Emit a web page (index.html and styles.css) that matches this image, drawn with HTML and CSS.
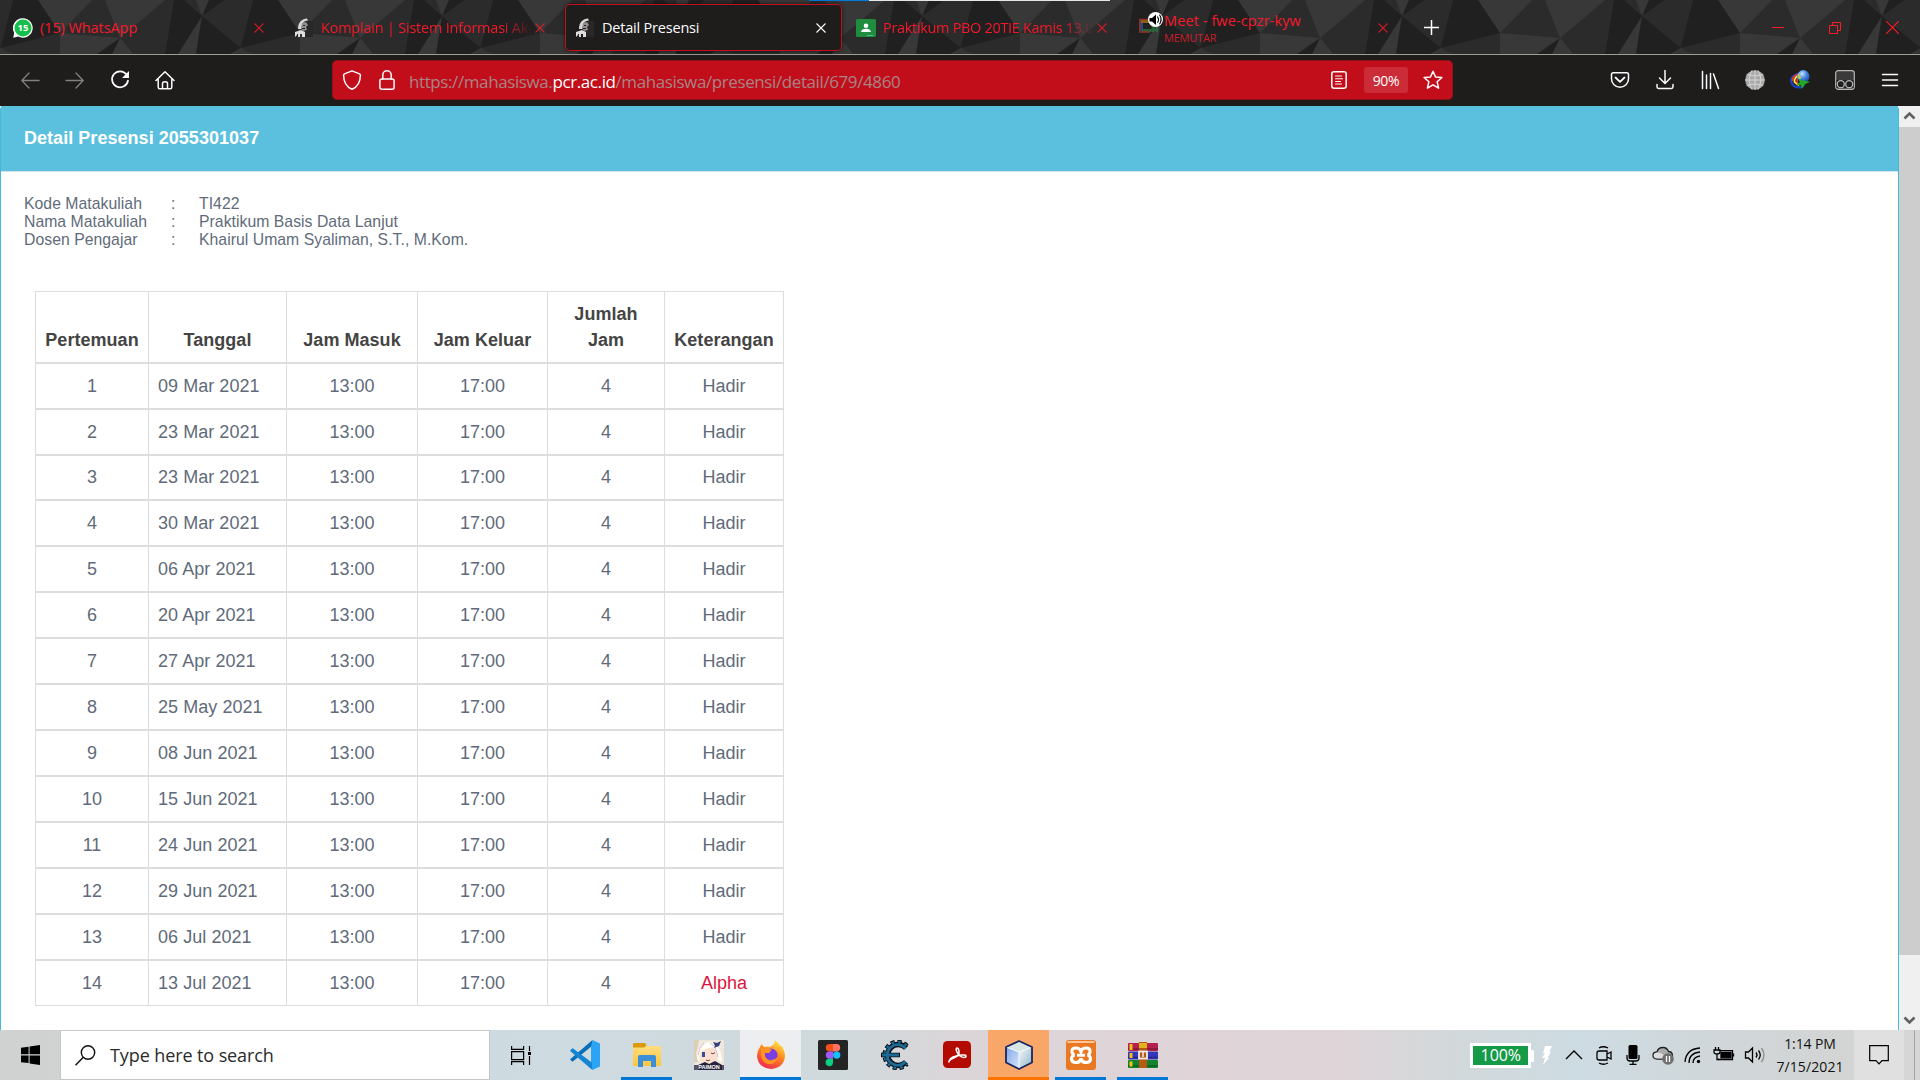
FILE: index.html
```html
<!DOCTYPE html>
<html lang="id">
<head>
<meta charset="utf-8">
<title>Detail Presensi</title>
<link rel="stylesheet" href="styles.css">
</head>
<body>
<svg class="defs" width="0" height="0" aria-hidden="true">
  <defs>
    <symbol id="x" viewBox="0 0 10 10"><path d="M.5.5l9 9M9.500.5l-9 9" fill="none" stroke="currentColor" stroke-width="1.1"/></symbol>
    <symbol id="statue" viewBox="0 0 20 20">
      <path d="M10 3h9v16H8z" fill="#2a2728"/>
      <path d="M4 11C4 4 8 1 13 .5l1 2C9 3 8 6 7.500 11z" fill="#d6d6d6"/>
      <path d="M8 5l4-1 2 3-2 2 1 3-4 1-2-3z" fill="#8f8f8f"/>
      <path d="M1 14l6-2 4 2v5H8v-3H6v3H4v-3l-3 3z" fill="#dedede"/>
      <path d="M9 7h2v1H9zM8 10h3v1H8zM3 16h1v3H3z" fill="#222"/>
    </symbol>
    <linearGradient id="fx" x1=".8" y1="0" x2=".3" y2="1"><stop offset="0" stop-color="#fff14a"/><stop offset=".45" stop-color="#ff8a1f"/><stop offset="1" stop-color="#f0264f"/></linearGradient>
    <linearGradient id="fld" x1="0" y1="0" x2="0" y2="1"><stop offset="0" stop-color="#ffe08a"/><stop offset="1" stop-color="#fcc63c"/></linearGradient>
    <linearGradient id="cubeL" x1="0" y1="0" x2="1" y2="1"><stop offset="0" stop-color="#7ea6e8"/><stop offset="1" stop-color="#d9e6fb"/></linearGradient>
    <linearGradient id="cubeR" x1="0" y1="0" x2="1" y2="1"><stop offset="0" stop-color="#f4f9fb"/><stop offset="1" stop-color="#8fb5c8"/></linearGradient>
    <radialGradient id="earth" cx=".4" cy=".3" r=".7"><stop offset="0" stop-color="#cfe6ff"/><stop offset=".5" stop-color="#4a8be0"/><stop offset="1" stop-color="#1b4fa8"/></radialGradient>
  </defs>
</svg>

<div class="screen">
  <header class="tabstrip">
    <svg class="theme" width="1920" height="54">
      <defs>
        <pattern id="poly" x="60" y="0" width="240" height="54" patternUnits="userSpaceOnUse">
          <rect width="240" height="54" fill="#2b2b2b"/>
          <g fill="#383838">
            <path d="M218 0L240 33V0zM0 0H32L0 33zM45 0H105L60 38zM0 33L60 38 37 54H0zM60 38L52 54H73zM136 0H149L142 16zM142 16L118 54H136z"/>
            <path d="M180.500 48L170 54H192z" fill="#333"/>
          </g>
          <g fill="#202020">
            <path d="M60 38L37 54H52zM114 0H124L142 16 118 54H105zM149 0H165L142 16zM142 16L180.500 48 170 54H136zM193 0H218L240 33 180.500 48z"/>
          </g>
        </pattern>
      </defs>
      <rect width="1920" height="54" fill="url(#poly)"/>
    </svg>
    <div class="snapbar"></div>
    <div class="tab">
      <svg class="fav" width="20" height="20" viewBox="0 0 20 20"><path d="M10 .3a9.700 9.700 0 1 1-4.700 18.200L.2 19.800l1-5A9.700 9.700 0 0 1 10 .3z" fill="#fff"/><circle cx="10" cy="10" r="8.500" fill="#14c04b"/><text x="10" y="13.300" text-anchor="middle" class="favnum">15</text></svg>
      <span class="tt t1">(15) WhatsApp</span>
      <svg class="close dim" width="10" height="10"><use href="#x"/></svg>
    </div>
    <div class="tab">
      <svg class="fav" width="20" height="20"><use href="#statue"/></svg>
      <span class="tt t2 fade">Komplain | Sistem Informasi Aka</span>
      <svg class="close dim" width="10" height="10"><use href="#x"/></svg>
    </div>
    <div class="tab active">
      <svg class="fav" width="20" height="20"><use href="#statue"/></svg>
      <span class="tt t3">Detail Presensi</span>
      <svg class="close" width="10" height="10"><use href="#x"/></svg>
    </div>
    <div class="tab">
      <svg class="fav" width="20" height="20" viewBox="0 0 20 20"><rect y="1" width="20" height="18" rx="1.500" fill="#1e8e3e"/><circle cx="10" cy="7.800" r="2.300" fill="#fff"/><path d="M5 14c0-4.500 10-4.500 10 0z" fill="#fff"/><path d="M11 17h6v1h-6z" fill="#57bb8a"/></svg>
      <span class="tt t4 fade">Praktikum PBO 20TIE Kamis 13.0</span>
      <svg class="close dim" width="10" height="10"><use href="#x"/></svg>
    </div>
    <div class="tab meet">
      <svg class="fav meetfav" width="28" height="26" viewBox="0 0 28 26"><g fill="none" stroke-width="3" opacity=".62"><path d="M3.500 8v11" stroke="#2a62c4"/><path d="M3 9.500h9" stroke="#c98a1a"/><path d="M4 18.500h11V12" stroke="#278a45"/><path d="M10 7.500H1.800v12.500H12" stroke="#d63d2c" stroke-width="1.500"/><path d="M15 14l4-2v7l-4-3" stroke="#278a45" stroke-width="2"/></g><circle cx="17.500" cy="7.500" r="7.500" fill="#fff"/><path d="M11.500 6h2.500l4-3.500v10.500l-4-3.500h-2.500z" fill="#000"/><path d="M19.500 4.500q2 3 0 6.200M21.500 2.800q3.200 4.700 0 9.500" fill="none" stroke="#000" stroke-width="1.100"/></svg>
      <span class="stack"><span class="tt t5">Meet - fwe-cpzr-kyw</span><span class="playing">MEMUTAR</span></span>
      <svg class="close dim" width="10" height="10"><use href="#x"/></svg>
    </div>
    <svg class="newtab" width="15" height="15" viewBox="0 0 15 15"><path d="M7.500 0v15M0 7.500h15" stroke="#fff" stroke-width="1.500"/></svg>
    <div class="winbtns">
      <svg width="12" height="13" viewBox="0 0 12 13"><path d="M0 6.500h12" stroke="#ff1a2a"/></svg>
      <svg width="12" height="13" viewBox="0 0 12 13"><path d="M.5 4.500h8v8h-8zM3.500 4V1.500h8v8H9" fill="none" stroke="#ff1a2a"/></svg>
      <svg width="13" height="13" viewBox="0 0 10 10"><path d="M.2.2l9.600 9.600M9.800.2L.2 9.800" stroke="#ff1a2a" stroke-width=".9"/></svg>
    </div>
  </header>

  <nav class="toolbar">
    <div class="navbtns">
      <svg width="20" height="20" viewBox="0 0 20 20" class="off"><path d="M19 10.500H2M9 3L1.800 10.500 9 18"/></svg>
      <svg width="20" height="20" viewBox="0 0 20 20" class="off"><path d="M1 10.500h17M11 3l7.200 7.500L11 18"/></svg>
      <svg width="20" height="20" viewBox="0 0 20 20"><path d="M16.500 4.500A8 8 0 1 0 18 10.500" stroke-width="1.700"/><path d="M19 1v7h-7z" fill="#fbfbfe" stroke="none"/></svg>
      <svg width="20" height="20" viewBox="0 0 20 20"><path d="M1 10.500L10 1.800l9 8.700M3.200 9v8.300q0 1.500 1.500 1.500h10.600q1.500 0 1.500-1.500V9M7.500 18.500v-5q0-1.700 2.500-1.700t2.500 1.700v5" stroke-width="1.500"/></svg>
    </div>
    <div class="urlbar">
      <svg width="20" height="20" viewBox="0 0 20 20" class="shield"><path d="M10 .9l7.500 3q1 .4.900 1.500C18.300 12 15 17 10 19.300 5 17 1.700 12 1.600 5.400q0-1.100.9-1.500z"/></svg>
      <svg width="16" height="20" viewBox="0 0 16 20" class="lock"><rect x=".9" y="9" width="14.200" height="10.200" rx="2"/><path d="M3.800 9V5a4.200 4.200 0 0 1 8.400 0v4"/></svg>
      <span class="url">https://mahasiswa.<b>pcr.ac.id</b>/mahasiswa/presensi/detail/679/4860</span>
      <svg width="16" height="18" viewBox="0 0 16 18" class="reader"><rect x=".8" y=".8" width="14.400" height="16.400" rx="2.200"/><path d="M4.500 5h6M4.500 7.800h7M4.500 10.500h5M4.500 13h6" stroke-width="1.100"/></svg>
      <span class="zoom">90%</span>
      <svg width="20" height="20" viewBox="0 0 20 20" class="star"><path d="M10 1.200l2.500 5.700 6.400.6-4.800 4.200 1.500 6.500-5.600-3.400-5.600 3.400 1.500-6.500L1.100 7.500l6.400-.6z"/></svg>
    </div>
    <div class="tools">
      <svg width="20" height="20" viewBox="0 0 20 20"><path d="M3.200 2.800h13.600q1.700 0 1.700 1.700v4.300a8.500 8.500 0 0 1-17 0V4.500q0-1.700 1.700-1.700z"/><path d="M5.500 7.500L10 11.800l4.500-4.300" stroke-width="1.800"/></svg>
      <svg width="20" height="20" viewBox="0 0 20 20"><path d="M10 0v13M4.500 8l5.500 5.500L15.500 8M2 14.500v2.300q0 1.600 1.600 1.600h12.800q1.600 0 1.600-1.600v-2.300"/></svg>
      <svg width="20" height="20" viewBox="0 0 20 20"><path d="M2.500 1.500v17M6.500 5v13.500M10.500 3.500v15M13.500 4l5 14.500"/></svg>
      <svg width="20" height="20" viewBox="0 0 20 20"><circle cx="10" cy="10" r="9.800" fill="#a9a9a9" stroke="none"/><path d="M10 0v20M0 10h20M2 4.500q8 3 16 0M2 15.500q8-3 16 0M7 .5q-6 9.500 0 19M13 .5q6 9.500 0 19" stroke="#dedede" stroke-width=".8"/></svg>
      <svg width="20" height="20" viewBox="0 0 20 20"><path d="M8 4Q2 6 1 10q0 5 5 7 4 1 7-1" stroke="#1c3fc0" stroke-width="2.400"/><path d="M8 4.500Q3 6 2.500 10" stroke="#d8372b" stroke-width="2"/><path d="M8.500 5.500Q4 8 4.500 12l4 3" stroke="#ffe24a" stroke-width="1.800"/><path d="M8.500 8Q6 10 7.500 13" stroke="#e6392b" stroke-width="1.600"/><circle cx="13.300" cy="6.300" r="6.200" fill="url(#earth)" stroke="none"/><path d="M8 3.500c2 2 4 3 2.500 6L7.500 8z" fill="#b7c95a" stroke="none"/><path d="M8.500 9.500l11.500 2.300-4.500 2.200-4 5-.5-4-5 .5 4-3.500z" fill="#23a823" stroke="none"/></svg>
      <svg width="20" height="20" viewBox="0 0 20 20"><rect x=".7" y=".7" width="18.600" height="18.600" rx="2.500" fill="#3a3a3a" stroke="#b5b5b5" stroke-width="1.200"/><path d="M1.500 10h17v8h-17z" fill="#1f1f1f" stroke="none"/><circle cx="5.800" cy="14.200" r="3.500" stroke="#b5b5b5" stroke-width="1.300"/><circle cx="14.200" cy="14.200" r="3.500" stroke="#b5b5b5" stroke-width="1.300"/></svg>
      <svg width="20" height="20" viewBox="0 0 20 20"><path d="M2.500 4.500h15M2.500 10h15M2.500 15.500h15"/></svg>
    </div>
  </nav>

  <div class="viewport">
    <main class="panel">
      <h1>Detail Presensi 2055301037</h1>
      <dl class="info">
        <dt>Kode Matakuliah</dt><dd>:</dd><dd>TI422</dd>
        <dt>Nama Matakuliah</dt><dd>:</dd><dd>Praktikum Basis Data Lanjut</dd>
        <dt>Dosen Pengajar</dt><dd>:</dd><dd>Khairul Umam Syaliman, S.T., M.Kom.</dd>
      </dl>
      <table>
        <thead><tr><th>Pertemuan</th><th>Tanggal</th><th>Jam Masuk</th><th>Jam Keluar</th><th>Jumlah<br>Jam</th><th>Keterangan</th></tr></thead>
        <tbody>
          <tr><td>1</td><td>09 Mar 2021</td><td>13:00</td><td>17:00</td><td>4</td><td>Hadir</td></tr>
          <tr><td>2</td><td>23 Mar 2021</td><td>13:00</td><td>17:00</td><td>4</td><td>Hadir</td></tr>
          <tr><td>3</td><td>23 Mar 2021</td><td>13:00</td><td>17:00</td><td>4</td><td>Hadir</td></tr>
          <tr><td>4</td><td>30 Mar 2021</td><td>13:00</td><td>17:00</td><td>4</td><td>Hadir</td></tr>
          <tr><td>5</td><td>06 Apr 2021</td><td>13:00</td><td>17:00</td><td>4</td><td>Hadir</td></tr>
          <tr><td>6</td><td>20 Apr 2021</td><td>13:00</td><td>17:00</td><td>4</td><td>Hadir</td></tr>
          <tr><td>7</td><td>27 Apr 2021</td><td>13:00</td><td>17:00</td><td>4</td><td>Hadir</td></tr>
          <tr><td>8</td><td>25 May 2021</td><td>13:00</td><td>17:00</td><td>4</td><td>Hadir</td></tr>
          <tr><td>9</td><td>08 Jun 2021</td><td>13:00</td><td>17:00</td><td>4</td><td>Hadir</td></tr>
          <tr><td>10</td><td>15 Jun 2021</td><td>13:00</td><td>17:00</td><td>4</td><td>Hadir</td></tr>
          <tr><td>11</td><td>24 Jun 2021</td><td>13:00</td><td>17:00</td><td>4</td><td>Hadir</td></tr>
          <tr><td>12</td><td>29 Jun 2021</td><td>13:00</td><td>17:00</td><td>4</td><td>Hadir</td></tr>
          <tr><td>13</td><td>06 Jul 2021</td><td>13:00</td><td>17:00</td><td>4</td><td>Hadir</td></tr>
          <tr><td>14</td><td>13 Jul 2021</td><td>13:00</td><td>17:00</td><td>4</td><td class="alpha">Alpha</td></tr>
        </tbody>
      </table>
    </main>
    <div class="scrollbar">
      <svg width="21" height="21" viewBox="0 0 21 21"><path d="M5.500 12.500l5-5 5 5" fill="none" stroke="#606060" stroke-width="2.600"/></svg>
      <div class="thumb"></div>
      <svg width="21" height="21" viewBox="0 0 21 21"><path d="M5.500 8.500l5 5 5-5" fill="none" stroke="#606060" stroke-width="2.600"/></svg>
    </div>
  </div>

  <footer class="taskbar">
    <div class="start"><svg width="19" height="20" viewBox="0 0 19 20"><path d="M0 2.700l7.600-1v7.600H0zM8.600 1.500L19 0v9.300H8.600zM0 10.400h7.600v7.700L0 17.200zM8.600 10.400H19V20L8.600 18.400z"/></svg></div>
    <div class="search">
      <svg width="21" height="21" viewBox="0 0 21 21"><circle cx="13" cy="7.500" r="6.700" fill="none" stroke="#111" stroke-width="1.400"/><path d="M8.300 12.300L.5 20.300" stroke="#111" stroke-width="1.500"/></svg>
      <span>Type here to search</span>
    </div>
    <div class="taskview"><svg width="20" height="19" viewBox="0 0 20 19"><path d="M.6 0v3.400h12V0M.6 5.600h12v8H.6zM.6 19v-3.400h12V19M18.500 0v5M18.500 10v9" fill="none" stroke="#000" stroke-width="1.200"/><path d="M17 6h3v3h-3z"/></svg></div>
    <div class="apps">
      <div class="app"><svg width="30" height="30" viewBox="0 0 30 30"><path d="M0 10.500l2.500-2.300L24 24l-1.500 6z" fill="#1f9cf0"/><path d="M0 19.500l2.500 2.300L22 6l.5-6L1 18.500z" fill="#0b6fb8"/><path d="M22.500 0L30 3.500v23L22.500 30 21 26.500V7z" fill="#2ba4f5"/><path d="M2.500 8.200L22 23v6.500L.3 11z" fill="#1684d0"/></svg></div>
      <div class="app open"><svg width="28" height="24" viewBox="0 0 28 24"><path d="M1 0h11l2 3H28v19q0 1-1 1H1q-1 0-1-1V1z" fill="url(#fld)"/><path d="M1 0h11l1.500 2-2 2.500H0V1z" fill="#d99a0b"/><path d="M5 24V14q0-2 2-2h14q2 0 2 2v10h-5v-6h-8v6z" fill="#3a8fd6"/></svg></div>
      <div class="app"><svg width="30" height="30" viewBox="0 0 30 30"><rect width="30" height="30" rx="1" fill="#f0e7dc"/><path d="M0 0h5L2 14l2 8H0z" fill="#dccdb5"/><path d="M6 9q8-5 17 1l0 9q-4 6-10 5-6-2-7-8z" fill="#fbe0cf"/><path d="M3 19Q3 4 15 2q12 0 13 20l-4-2-1-8-4-5-7 2-5 2-2 6 1 6z" fill="#fffdfa"/><path d="M10 3q-5 5-6 12M16 3q6 3 8 14" fill="none" stroke="#cfc4c4"/><path d="M23 3l-4-1 2 4-1 2 5-2 2-5z" fill="#33407c"/><path d="M8 12h3v5H8z" fill="#3c4a9c"/><path d="M17 13q2 2 4-.500M12 20q2 1.500 4 0" fill="none" stroke="#734248"/><path d="M4 25l7-3 4 2 6-3 7 4v5H4z" fill="#25233b"/><path d="M0 25h30v5H0z" fill="#25233b" opacity=".75"/><text x="15" y="29" text-anchor="middle" class="cap">PAIMON</text></svg></div>
      <div class="app focus"><svg width="28" height="29" viewBox="0 0 28 29"><path d="M3 7l1.500-3L7 7q4-1 6 0l4-3 1-4 4 4 2 2 1.500 1Q28 12 28 16 27 28 14 29 1 28 0 16 0 11 3 7z" fill="url(#fx)"/><circle cx="14" cy="15" r="6.500" fill="#7b3ee0"/><path d="M4 9q5-2 7 0l4 .5-3 3.500-4 0q-1 5 4 7 5 1 9-3-2 8-10 7Q3 22 4 9z" fill="#ff9420"/></svg></div>
      <div class="app"><svg width="30" height="30" viewBox="0 0 30 30"><rect width="30" height="30" rx="1.500" fill="#242424"/><path d="M15 4h-3.500a3.700 3.700 0 0 0 0 7.400H15z" fill="#f24e1e"/><path d="M15 4h3.500a3.700 3.700 0 0 1 0 7.400H15z" fill="#ff7262"/><path d="M15 11.400h-3.500a3.700 3.700 0 0 0 0 7.400H15z" fill="#a259ff"/><circle cx="18.700" cy="15.100" r="3.700" fill="#1abcfe"/><path d="M15 18.800h-3.500a3.700 3.700 0 1 0 3.500 3.700z" fill="#0acf83"/></svg></div>
      <div class="app"><svg width="28" height="30" viewBox="0 0 28 30"><g fill="none"><path d="M26 6A13 13 0 1 0 26 24" stroke="#0b0f14" stroke-width="4.500" stroke-dasharray="4 2.600"/><path d="M25 8A10.500 10.500 0 1 0 25 22" stroke="#0b0f14" stroke-width="5.500"/><path d="M26 6A13 13 0 1 0 26 24" stroke="#1c6a95" stroke-width="2.500" stroke-dasharray="2.600 4" stroke-dashoffset="-.7"/><path d="M0 15h19" stroke="#0b0f14" stroke-width="4.500"/><path d="M24.500 8.500A10.300 10.300 0 1 0 24.500 21.500M1 15h17" stroke="#1c6a95" stroke-width="2.800"/></g></svg></div>
      <div class="app"><svg width="28" height="28" viewBox="0 0 28 28"><rect width="28" height="27" rx="4.500" fill="#b30b00"/><path d="M6 20c2-3 6-3 9-5 2-2 1-8-1-8s0 6 3 8 6 2 6 0-8-1-13 1-4 7-4 4z" fill="none" stroke="#fff" stroke-width="1.500"/></svg></div>
      <div class="app alert"><svg width="30" height="30" viewBox="0 0 30 30"><path d="M15 1L28 7v15.500L15 29 2 22.500V7z" fill="#d7e6e3"/><path d="M2 7l13 5v17L2 22.500z" fill="url(#cubeL)"/><path d="M28 7l-13 5v17l13-6.500z" fill="url(#cubeR)"/><path d="M2 7l13 5 13-5M15 12v16" fill="none" stroke="#f4fbff"/><path d="M15 1L28 7v15.500L15 29 2 22.500V7z" fill="none" stroke="#1b2560" stroke-width="1.800" stroke-linejoin="round"/></svg></div>
      <div class="app open"><svg width="30" height="30" viewBox="0 0 30 30"><rect width="30" height="30" rx="3" fill="#ea7722"/><path d="M1.500 1h27v2h-27z" fill="#ffc79a"/><path d="M10 8q4 0 5 3.500Q16 8 20 8q4.500 0 4 4-.5 2.500-2.500 3 2.500.5 3 3.500 0 4-4.500 4-4 0-5-4-1 4-5 4-4.500 0-4.500-4 .5-3 3-3.500-2-.5-2.500-3-.5-4 4-4z" fill="none" stroke="#fff" stroke-width="3.200"/><path d="M11 15.200h8" stroke="#fff" stroke-width="3"/></svg></div>
      <div class="app open"><svg width="30" height="26" viewBox="0 0 30 26"><rect y="1" width="30" height="8" rx="1" fill="#b5204e"/><rect y="9.500" width="30" height="8" rx="1" fill="#3438b8"/><rect y="18" width="30" height="8" rx="1" fill="#12842e"/><path d="M0 7h30M0 15.500h30M0 24h30" stroke="#0004" stroke-width="1.500"/><path d="M3 2v6M3 11v5M3 19.500v5" stroke="#f2c21b" stroke-width="3"/><rect x="11" width="8" height="26" fill="#b45a12"/><path d="M11 1h8v5h-8z" fill="#e2b21d"/><rect x="11" y="9.500" width="8" height="7" fill="none" stroke="#eee" stroke-width="1.800"/><path d="M15 10v5" stroke="#eee" stroke-width="1.500"/></svg></div>
    </div>
    <div class="tray">
      <div class="batt"><span>100%</span></div>
      <svg class="bolt" width="10" height="19" viewBox="0 0 10 19"><path d="M3 0h7L7.500 5.500h1.500L5.500 12H7l-6 7L3 12H0l3-4.500H1z" fill="#fff"/></svg>
      <div class="icons">
        <svg width="20" height="20" viewBox="0 0 20 20"><path d="M2 14l8-8 8 8"/></svg>
        <svg width="20" height="20" viewBox="0 0 20 20"><path d="M5 6h8v9H5q-2 0-2-2V8q0-2 2-2zM13 9l4-2v7l-4-2M5 3q4-2.500 9 0M5 18q4 2.500 9 0"/></svg>
        <svg width="20" height="20" viewBox="0 0 20 20"><rect x="5.500" y="0" width="9" height="14" rx="1.500" fill="#000" stroke="none"/><path d="M4 10v3q0 3 3 3h6q3 0 3-3v-3M10 16v3.500M6.500 19.500h7"/></svg>
        <svg width="22" height="20" viewBox="0 0 22 20"><path d="M5 14q-4 0-4-3.500Q1 7 5 7q1-4.500 6-4.500 4 0 5.500 4 4 0 4 4.500 0 3-3 3z" fill="#a9abac" stroke="#222"/><path d="M5 7.500q5-1 9 6H5q-3 0-3.300-3 .3-3 3.300-3z" fill="#dedede" stroke="none"/><circle cx="16" cy="14" r="5.800" fill="#6f6f6f" stroke="none"/><path d="M14.500 11v6M17.500 11v6" stroke="#fff"/></svg>
        <svg width="20" height="20" viewBox="0 0 20 20"><path d="M2 17Q3 4 17 3M6 18Q6 8 17 7M10 18q0-6 7-7"/><circle cx="15.500" cy="16.500" r="1.700" fill="#000" stroke="none"/></svg>
        <svg width="22" height="20" viewBox="0 0 22 20"><path d="M6.500 5.700h13v8.800H5" /><path d="M8 7.500h10v5.300H8z" fill="#000"/><path d="M20.500 8.500v3M2.500 2v3M5.500 2v3M1 5h6v2q0 2-3 2t-3-2zM4 9v5.500h2"/></svg>
        <svg width="22" height="20" viewBox="0 0 22 20"><path d="M1.500 7h3l4-4v14l-4-4h-3zM12 7.500q2 2.500 0 5M14.500 5.500q3.500 4.500 0 9"/><path d="M17.500 3q5 7 0 14" stroke="#8d8d8d"/></svg>
      </div>
      <div class="clock"><span class="time">1:14 PM</span><span class="date">7/15/2021</span></div>
      <div class="notif"><svg width="20" height="20" viewBox="0 0 20 20"><path d="M.7.7h18.600v15H13L10 18.800 7 15.700H.7z" fill="none" stroke="#000" stroke-width="1.200"/></svg></div>
      <div class="desk"></div>
    </div>
  </footer>
</div>
</body>
</html>
```
FILE: styles.css
```css
* { box-sizing: border-box; }
body { margin: 0; overflow: hidden; font-family: "Liberation Sans", Arial, sans-serif; }
svg { display: block; flex: none; }
.defs { position: absolute; }
.screen { width: 1920px; height: 1080px; display: flex; flex-direction: column; background: #fff; }

/* tab strip */
.tabstrip { position: relative; height: 55px; flex: none; display: flex; gap: 4px; padding: 4px 0 0 3px; border-bottom: 1px solid #a09d93; background: #2b2b2b; font-family: "Open Sans", "Noto Sans", sans-serif; }
.theme { position: absolute; left: 0; top: 0; }
.snapbar { position: absolute; left: 809px; top: 0; width: 301px; height: 1px; background: linear-gradient(90deg, #0078d7 60px, #e6e6e6 60px); }
.tab { position: relative; width: 277px; height: 47px; display: flex; align-items: center; padding: 0 16px 0 10px; border-radius: 5px; color: #f5192b; }
.tab.active { color: #fbfbfe; background: #1e1d1b; box-shadow: 0 0 0 1px #c30f1c inset, 0 0 4px #0008; }
.fav { margin-right: 7px; }
.favnum { font: bold 9.500px "Open Sans", sans-serif; fill: #fff; }
.tt { font-size: 14.500px; line-height: 20px; padding-top: 1px; white-space: nowrap; margin-right: auto; }
.t1 { letter-spacing: -.08px; }
.t2 { letter-spacing: -.22px; }
.t3 { letter-spacing: -.2px; }
.t4 { letter-spacing: -.32px; }
.t5 { letter-spacing: .1px; }
.fade { width: 212px; -webkit-mask-image: linear-gradient(90deg, #000 180px, transparent 212px); mask-image: linear-gradient(90deg, #000 180px, transparent 212px); }
.close { margin-left: -6px; }
.close.dim { opacity: .8; }
.meetfav { margin: -6px 0 0 1px; }
.meet .tt { line-height: 18px; }
.stack { display: flex; flex-direction: column; margin-right: auto; margin-left: -2px; padding-bottom: 0; }
.playing { font-size: 11px; line-height: 15px; letter-spacing: -.2px; color: #c91d2a; }
.newtab { position: relative; margin: 16px 0 0 16px; }
.winbtns { position: relative; display: flex; align-items: center; gap: 45px; margin: 0 21px 0 auto; height: 46px; }

/* toolbar */
.toolbar { height: 51px; flex: none; display: flex; align-items: center; padding-bottom: 1px; background: #1e1d1b; }
.toolbar svg { fill: none; stroke: #fbfbfe; stroke-width: 1.5; stroke-linecap: round; stroke-linejoin: round; }
.toolbar svg.off { stroke: #82817f; stroke-width: 1.300; }
.navbtns { width: 332px; display: flex; gap: 25px; padding-left: 20px; }
.urlbar { width: 1121px; height: 40px; flex: none; display: flex; align-items: center; padding: 0 9px; border-radius: 5px; background: #c20e1a; border: 1px solid #93121a; }
.lock { margin-left: 17px; }
.url { margin: 3px auto 0 14px; font: 17px/24px "Open Sans", "Noto Sans", sans-serif; letter-spacing: -.4px; color: #a88485; white-space: nowrap; }
.url b { font-weight: 400; color: #fff; }
.zoom { width: 44px; height: 26px; margin: 0 15px 0 17px; border-radius: 3px; background: #cc2c38; color: #fff; font: 14px/27px "Open Sans", "Noto Sans", sans-serif; letter-spacing: -.3px; text-align: center; }
.tools { display: flex; gap: 25px; margin: 0 20px 0 auto; }

/* page */
.viewport { flex: 1; min-height: 0; display: flex; overflow: hidden; }
.panel { width: 1899px; border: 1px solid #46b8da; border-width: 0 1px; border-radius: 4px 4px 0 0; color: #5f6b7a; }
h1 { margin: 0; height: 66px; padding: 22px 23px 0; background: #5bc0de; border-bottom: 1px solid #d5e4ea; color: #fff; font-size: 18px; line-height: 21px; letter-spacing: .04px; }
.info { display: grid; grid-template-columns: 147px 28px 1fr; margin: 22.500px 0 0 23px; font-size: 15.750px; line-height: 18px; letter-spacing: .04px; }
.info dt, .info dd { margin: 0; }
table { display: block; margin: 42.500px 0 0 34px; width: 749px; border-left: 1px solid #ddd; border-top: 1px solid #ddd; font-size: 18px; line-height: 26px; }
thead, tbody { display: block; }
tr { display: grid; grid-template-columns: 113px 138px 131px 130px 117px 119px; height: 46px; border-bottom: 2px solid #ddd; }
thead tr { height: 72px; align-items: stretch; }
tbody tr:nth-child(3) { height: 45px; }
tbody tr:nth-child(3) td { padding-top: 8px; }
tbody tr:last-child { height: 45px; border-bottom-width: 1px; }
th, td { padding: 9px 0 0; border-right: 1px solid #ddd; text-align: center; }
th { display: flex; align-items: flex-end; justify-content: center; padding: 0 0 9px; color: #444; letter-spacing: .04px; }
td:nth-child(2) { text-align: left; padding-left: 9px; letter-spacing: .05px; }
.alpha { color: #dc143c; }
.scrollbar { width: 21px; display: flex; flex-direction: column; background: #f0f0f0; }
.thumb { height: 828px; margin-bottom: auto; background: #cdcdcd; }

/* taskbar */
.taskbar { height: 50px; flex: none; display: flex; align-items: stretch; font-family: "Open Sans", "Noto Sans", sans-serif; background: linear-gradient(90deg, #d0d2d2 0, #d1d3d2 60px, #cddbe1 500px, #d0d9dc 840px, #dbd5d8 960px, #e0d4d8 1200px, #dfd5d9 1340px, #d2d8da 1450px, #cddbe2 1580px, #d0d7da 1700px, #d3d4d4 1850px, #d6d6d6 1920px); }
.start { width: 60px; display: flex; align-items: center; justify-content: center; }
.search { width: 430px; display: flex; align-items: center; padding-left: 14px; gap: 14px; background: #fff; border: 1px solid #c6c6c6; font-size: 18px; letter-spacing: -.1px; color: #2b2b2b; }
.taskview { width: 64px; padding-right: 3px; display: flex; align-items: center; justify-content: center; }
.apps { display: flex; gap: 1px; }
.app { width: 61px; display: flex; align-items: center; justify-content: center; }
.open { background: linear-gradient(#0078d7, #0078d7) 50% 100% / 51px 3px no-repeat; }
.focus { background: #eceef0; border-bottom: 3px solid #0078d7; padding-top: 2px; }
.alert { background: #f8a768; border-bottom: 3px solid #ff7300; padding-top: 3px; }
.cap { font: bold 5.500px "Liberation Sans", sans-serif; fill: #fff; }
.tray { margin-left: auto; display: flex; align-items: center; }
.batt { position: relative; width: 61px; height: 25px; border: 3px solid #fff; background: #159a48; color: #fff; font-size: 16px; line-height: 19px; text-align: center; letter-spacing: -.1px; }
.batt::after { content: ""; position: absolute; right: -6px; top: 4px; width: 3px; height: 12px; background: #fff; }
.bolt { margin: 0 12px 0 11px; }
.icons { display: flex; gap: 9.300px; }
.icons svg { fill: none; stroke: #000; stroke-width: 1.3; }
.clock { width: 88px; display: flex; flex-direction: column; align-items: center; font-size: 14px; line-height: 23px; color: #111; }
.time { letter-spacing: -.1px; }
.date { letter-spacing: .1px; }
.notif { width: 50px; height: 50px; display: flex; align-items: center; justify-content: center; background: #dfe0df; }
.desk { width: 16px; height: 50px; background: linear-gradient(90deg, transparent 10px, #a5a5a5 10px, #a5a5a5 11px, transparent 11px); }
```
